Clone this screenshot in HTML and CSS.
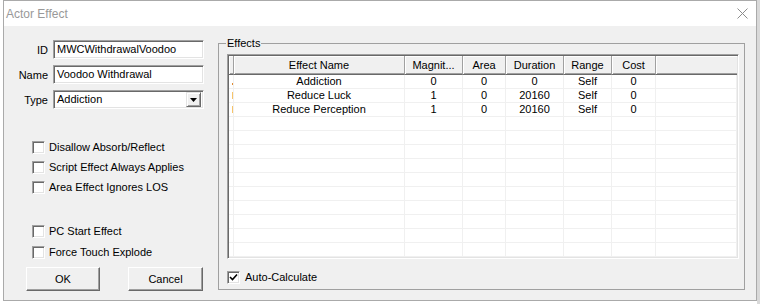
FILE: index.html
```html
<!DOCTYPE html>
<html>
<head>
    <link rel="stylesheet" href="styles.css">
</head>
<body>
    <div class="dialog">
        <div class="titlebar">
            <span class="title">Actor Effect</span>
            <svg class="close" width="11" height="11" viewBox="0 0 11 11">
                <path d="M0.5 0.5L10.5 10.5M10.5 0.5L0.5 10.5" stroke="#8c8c8c" stroke-width="1" fill="none"/>
            </svg>
        </div>
        <div class="content">
            <div class="left">
                <div class="field">
                    <label>ID</label>
                    <div class="edit">MWCWithdrawalVoodoo</div>
                </div>
                <div class="field">
                    <label>Name</label>
                    <div class="edit">Voodoo Withdrawal</div>
                </div>
                <div class="field">
                    <label>Type</label>
                    <div class="edit combo">
                        <span>Addiction</span>
                        <span class="drop">
                            <svg width="7" height="4" viewBox="0 0 7 4"><path d="M0 0H7L3.5 4Z" fill="#000"/></svg>
                        </span>
                    </div>
                </div>

                <div class="checks">
                    <div class="check"><span class="box"></span>Disallow Absorb/Reflect</div>
                    <div class="check"><span class="box"></span>Script Effect Always Applies</div>
                    <div class="check"><span class="box"></span>Area Effect Ignores LOS</div>
                </div>
                <div class="checks second">
                    <div class="check"><span class="box"></span>PC Start Effect</div>
                    <div class="check"><span class="box"></span>Force Touch Explode</div>
                </div>

                <div class="buttons">
                    <button id="okBtn">OK</button>
                    <button id="cancelBtn">Cancel</button>
                </div>
            </div>

            <fieldset class="group">
                <legend>Effects</legend>
                <div class="list">
                    <table>
                        <thead>
                            <tr>
                                <th class="c-row"></th>
                                <th class="c-name">Effect Name</th>
                                <th class="c-mag">Magnit...</th>
                                <th class="c-area">Area</th>
                                <th class="c-dur">Duration</th>
                                <th class="c-range">Range</th>
                                <th class="c-cost">Cost</th>
                                <th class="c-fill"></th>
                            </tr>
                        </thead>
                        <tbody>
                            <tr>
                                <td class="rowhead"><span class="mark dot"></span></td>
                                <td>Addiction</td><td>0</td><td>0</td><td>0</td><td>Self</td><td>0</td><td></td>
                            </tr>
                            <tr>
                                <td class="rowhead"><span class="mark"></span></td>
                                <td>Reduce Luck</td><td>1</td><td>0</td><td>20160</td><td>Self</td><td>0</td><td></td>
                            </tr>
                            <tr>
                                <td class="rowhead"><span class="mark"></span></td>
                                <td>Reduce Perception</td><td>1</td><td>0</td><td>20160</td><td>Self</td><td>0</td><td></td>
                            </tr>
                            <tr><td></td><td></td><td></td><td></td><td></td><td></td><td></td><td></td></tr>
                            <tr><td></td><td></td><td></td><td></td><td></td><td></td><td></td><td></td></tr>
                            <tr><td></td><td></td><td></td><td></td><td></td><td></td><td></td><td></td></tr>
                            <tr><td></td><td></td><td></td><td></td><td></td><td></td><td></td><td></td></tr>
                            <tr><td></td><td></td><td></td><td></td><td></td><td></td><td></td><td></td></tr>
                            <tr><td></td><td></td><td></td><td></td><td></td><td></td><td></td><td></td></tr>
                            <tr><td></td><td></td><td></td><td></td><td></td><td></td><td></td><td></td></tr>
                            <tr><td></td><td></td><td></td><td></td><td></td><td></td><td></td><td></td></tr>
                            <tr><td></td><td></td><td></td><td></td><td></td><td></td><td></td><td></td></tr>
                            <tr><td></td><td></td><td></td><td></td><td></td><td></td><td></td><td></td></tr>
                        </tbody>
                    </table>
                </div>
                <div class="check auto">
                    <span class="box">
                        <svg width="9" height="9" viewBox="0 0 9 9"><path d="M1 4L3.5 6.5L8 1.5" stroke="#000" stroke-width="1.6" fill="none"/></svg>
                    </span>Auto-Calculate
                </div>
            </fieldset>
        </div>
    </div>
</body>
</html>
```

FILE: styles.css
```css
body {
    margin: 0;
    background: linear-gradient(to right, #fff 757px, #d9d9d9 757px);
    font-family: "Liberation Sans", Arial, sans-serif;
    font-size: 11px;
    color: #000;
}
.dialog {
    width: 754px;
    height: 301px;
    margin-left: 3px;
    box-sizing: border-box;
    border: 1px solid #aaa;
    background: #f0f0f0;
    display: flex;
    flex-direction: column;
}
.titlebar {
    height: 25px;
    flex: none;
    background: #fff;
    display: flex;
    align-items: center;
    justify-content: space-between;
    padding: 0 8px 0 2px;
}
.title {
    font-size: 12px;
    color: #999;
}
.content {
    display: flex;
    flex: 1;
}
.left {
    width: 214px;
    flex: none;
    padding-top: 14px;
    box-sizing: border-box;
}
.field {
    display: flex;
    align-items: center;
    height: 19px;
    margin-bottom: 6px;
}
.field label {
    width: 44px;
    margin-right: 5px;
    text-align: right;
}
.edit {
    width: 151px;
    height: 19px;
    box-sizing: border-box;
    background: #fff;
    border: 1px solid;
    border-color: #a0a0a0 #fff #fff #a0a0a0;
    box-shadow: inset 1px 1px #696969, inset -1px -1px #e3e3e3;
    padding: 1px 3px;
    line-height: 15px;
    white-space: nowrap;
}
.combo {
    display: flex;
    justify-content: space-between;
    padding-right: 2px;
}
.drop {
    width: 15px;
    height: 15px;
    box-sizing: border-box;
    background: #f0f0f0;
    border: 1px solid;
    border-color: #e3e3e3 #696969 #696969 #e3e3e3;
    box-shadow: inset 1px 1px #fff, inset -1px -1px #a0a0a0;
    display: flex;
    align-items: center;
    justify-content: center;
}
.checks {
    margin-top: 32px;
    padding-left: 28px;
}
.checks.second {
    margin-top: 31px;
}
.check {
    display: flex;
    align-items: center;
    height: 13px;
    line-height: 13px;
    margin-bottom: 7px;
    white-space: nowrap;
}
.checks.second .check {
    margin-bottom: 8px;
}
.box {
    width: 13px;
    height: 13px;
    flex: none;
    box-sizing: border-box;
    margin-right: 4px;
    background: #fff;
    border: 1px solid;
    border-color: #a0a0a0 #fff #fff #a0a0a0;
    box-shadow: inset 1px 1px #696969, inset -1px -1px #e3e3e3;
    display: flex;
    align-items: center;
    justify-content: center;
}
.buttons {
    display: flex;
    gap: 28px;
    margin-top: 2px;
    padding-left: 22px;
}
button {
    height: 24px;
    padding: 0;
    font-family: "Liberation Sans", Arial, sans-serif;
    font-size: 11px;
    color: #000;
    background: #f0f0f0;
    border: 1px solid;
    border-color: #fff #696969 #696969 #fff;
    box-shadow: inset -1px -1px #a0a0a0;
}
#okBtn {
    width: 74px;
}
#cancelBtn {
    width: 75px;
}
.group {
    width: 527px;
    height: 253px;
    box-sizing: border-box;
    margin: 11px 0 0 0;
    padding: 4px 5px 5px 8px;
    border: 1px solid #a0a0a0;
    min-width: 0;
}
.group legend {
    padding: 0 1px;
    margin-left: -1px;
    line-height: 13px;
}
.list {
    height: 205px;
    box-sizing: border-box;
    border: 1px solid;
    border-color: #a0a0a0 #fff #fff #a0a0a0;
    box-shadow: inset 1px 1px #696969, inset -1px -1px #e3e3e3;
    padding: 1px;
    background: #fff;
    overflow: hidden;
}
table {
    width: 100%;
    table-layout: fixed;
    border-collapse: separate;
    border-spacing: 0;
}
th {
    height: 19px;
    box-sizing: border-box;
    padding: 0;
    font-weight: normal;
    background: #f0f0f0;
    border-right: 1px solid #a0a0a0;
    border-bottom: 1px solid #696969;
    box-shadow: inset 1px 1px #fff, inset 0 -1px #a0a0a0;
    white-space: nowrap;
    overflow: hidden;
}
.c-row { width: 5px; }
.c-name { width: 171px; }
.c-mag { width: 58px; }
.c-area { width: 43px; }
.c-dur { width: 58px; }
.c-range { width: 48px; }
.c-cost { width: 44px; }
.c-fill { border-right: none; }
td {
    height: 14px;
    box-sizing: border-box;
    padding: 0;
    line-height: 13px;
    text-align: center;
    border-right: 1px solid #f0f0f0;
    border-bottom: 1px solid #f0f0f0;
    white-space: nowrap;
    overflow: hidden;
}
.rowhead {
    position: relative;
}
.mark {
    position: absolute;
    right: 0;
    top: 3px;
    width: 1px;
    height: 7px;
    background: #f7c46a;
}
.mark.dot {
    top: 8px;
    height: 2px;
    background: #e08a30;
}
.check.auto {
    margin: 12px 0 0 0;
}
.check.auto .box {
    margin-right: 5px;
}
```
